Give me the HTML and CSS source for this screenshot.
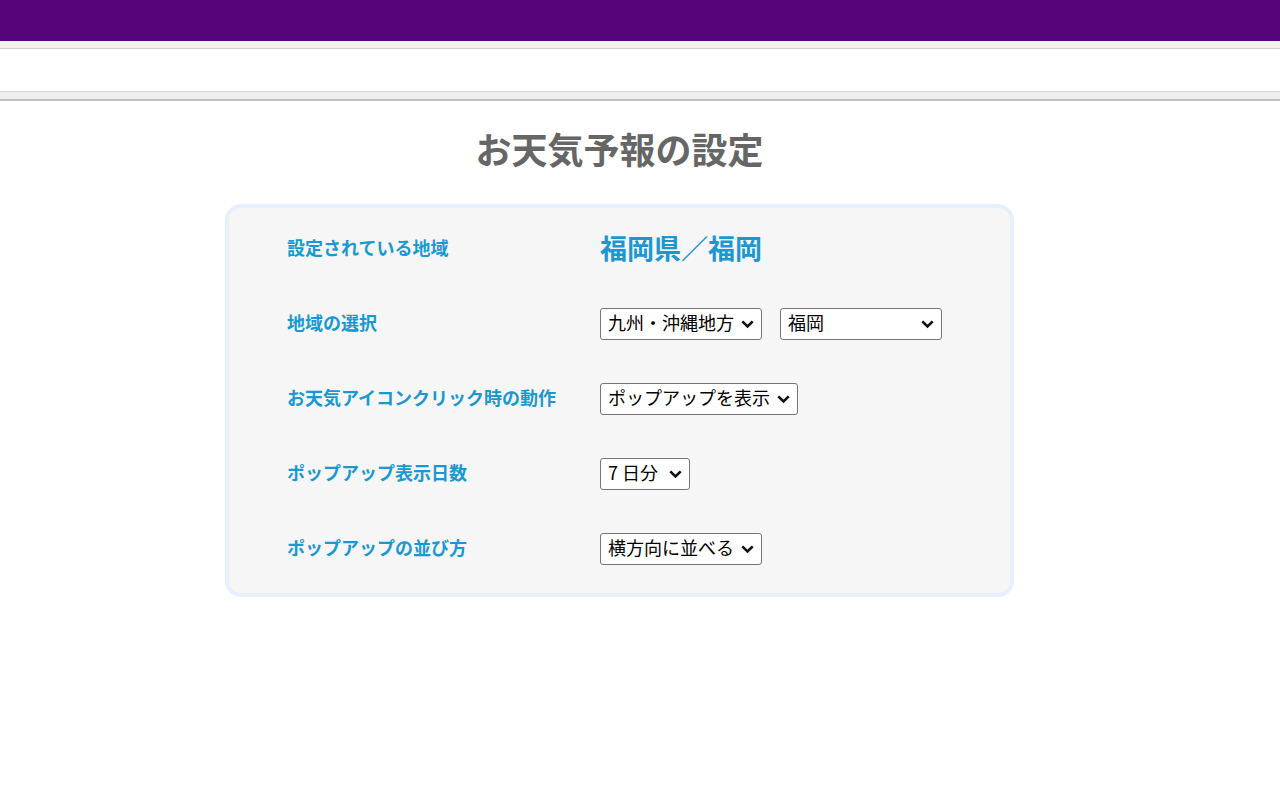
FILE: index.html
```html
<!DOCTYPE html>
<html lang="ja">
<head>
<meta charset="utf-8">
<title>お天気予報の設定</title>
<link rel="stylesheet" href="styles.css">
</head>
<body>
<div class="topbar"></div>
<div class="toolbar">
  <div class="tb-top"></div>
  <div class="tb-mid"></div>
  <div class="tb-bottom"></div>
</div>
<main class="main">
  <h1 class="title">お天気予報の設定</h1>
  <section class="card">
    <div class="row">
      <div class="label">設定されている地域</div>
      <div class="value current">福岡県／福岡</div>
    </div>
    <div class="row">
      <div class="label">地域の選択</div>
      <div class="value">
        <span class="sel w162"><select><option>九州・沖縄地方</option></select><svg class="chev" viewBox="0 0 13 9" width="13" height="9"><path d="M1.3 1.3 L6.5 6.5 L11.7 1.3" fill="none" stroke="#111" stroke-width="2.6"/></svg></span>
        <span class="sel w162"><select><option>福岡</option></select><svg class="chev" viewBox="0 0 13 9" width="13" height="9"><path d="M1.3 1.3 L6.5 6.5 L11.7 1.3" fill="none" stroke="#111" stroke-width="2.6"/></svg></span>
      </div>
    </div>
    <div class="row">
      <div class="label">お天気アイコンクリック時の動作</div>
      <div class="value">
        <span class="sel w198"><select><option>ポップアップを表示</option></select><svg class="chev" viewBox="0 0 13 9" width="13" height="9"><path d="M1.3 1.3 L6.5 6.5 L11.7 1.3" fill="none" stroke="#111" stroke-width="2.6"/></svg></span>
      </div>
    </div>
    <div class="row">
      <div class="label">ポップアップ表示日数</div>
      <div class="value">
        <span class="sel w90"><select><option>7 日分</option></select><svg class="chev" viewBox="0 0 13 9" width="13" height="9"><path d="M1.3 1.3 L6.5 6.5 L11.7 1.3" fill="none" stroke="#111" stroke-width="2.6"/></svg></span>
      </div>
    </div>
    <div class="row">
      <div class="label">ポップアップの並び方</div>
      <div class="value">
        <span class="sel w162"><select><option>横方向に並べる</option></select><svg class="chev" viewBox="0 0 13 9" width="13" height="9"><path d="M1.3 1.3 L6.5 6.5 L11.7 1.3" fill="none" stroke="#111" stroke-width="2.6"/></svg></span>
      </div>
    </div>
  </section>
</main>
</body>
</html>
```
FILE: styles.css
```css
* { box-sizing: border-box; }
html, body { margin: 0; padding: 0; background: #fff; }
body {
  font-family: "Noto Sans CJK JP", "Noto Sans", sans-serif;
  font-size: 18px;
  color: #000;
}
.topbar { height: 41px; background: #550479; }
.tb-top { height: 8px; background: #f1f1f1; border-bottom: 1px solid #cfcfcf; }
.tb-mid { height: 42px; background: #fff; }
.tb-bottom { height: 10px; background: #efefef; border-top: 1px solid #d6d6d6; border-bottom: 2px solid #c0c0c0; }
.main { padding-right: 41px; }
.title {
  margin: 24px 0 0;
  text-align: center;
  font-size: 36px;
  line-height: 46px;
  font-weight: 700;
  color: #666;
}
.card {
  width: 789px;
  margin: 33px auto 0;
  background: #f6f6f6;
  border: 4px solid #e6f0ff;
  border-radius: 16px;
  padding: 25px 0 28px 58px;
  display: flex;
  flex-direction: column;
  gap: 43px;
}
.row { display: flex; align-items: center; height: 32px; }
.label {
  width: 313px;
  font-weight: 700;
  color: #1a98d2;
  font-size: 18px;
  line-height: 24px;
  padding-bottom: 4px;
}
.value { display: flex; align-items: center; gap: 18px; }
.current { font-size: 27px; font-weight: 700; color: #1a98d2; line-height: 32px; padding-bottom: 3px; }
.sel { position: relative; display: inline-block; height: 32px; }
.sel select {
  appearance: none;
  -webkit-appearance: none;
  height: 32px;
  width: 100%;
  margin: 0;
  border: 1px solid #767676;
  border-radius: 3px;
  background: #fff;
  color: #000;
  font-family: "Noto Sans CJK JP", "Noto Sans", sans-serif;
  font-size: 18px;
  padding: 0 24px 3px 7px;
  line-height: 27px;
}
.w162 { width: 162px; }
.w198 { width: 198px; }
.w90 { width: 90px; }
.chev { position: absolute; right: 8px; top: 12px; pointer-events: none; }
```
